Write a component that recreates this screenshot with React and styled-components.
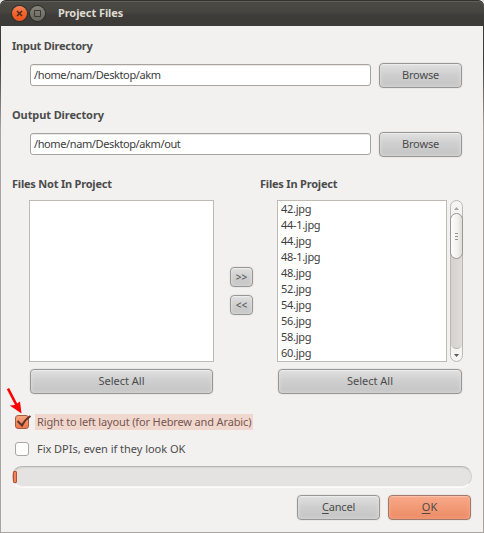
import React from "react";
import styled, { createGlobalStyle } from "styled-components";

const GlobalStyle = createGlobalStyle`
  * { box-sizing: border-box; }
  body { margin: 0; background: #e6e5e3; }
`;

const Window = styled.main`
  width: 484px;
  height: 533px;
  display: flex;
  flex-direction: column;
  overflow: hidden;
  border-radius: 6px 6px 0 0;
  padding: 0 1px 1px;
  background: linear-gradient(#3c3b37 0 60px, #a9a49f 130px);
  color: #4c4c4c;
  font: 11px/16px "Noto Sans", sans-serif;
  white-space: nowrap;
`;

const TitleBar = styled.header`
  flex: none;
  height: 26px;
  margin: 0 -1px;
  padding: 0 0 0 12px;
  display: flex;
  align-items: center;
  border-radius: 6px 6px 0 0;
  border-top: 1px solid #33322e;
  box-shadow: inset 0 1px #605f5a;
  background: linear-gradient(#4b4a45 0, #464540 11px, #3d3c38 14px, #3b3a36 100%);
`;

const WindowControl = styled.span`
  width: 15px;
  height: 15px;
  margin-right: 3px;
  border-radius: 50%;
  display: grid;
  place-items: center;
  box-shadow: 0 0 0 1px #2f2e2b;
  background: ${(p) => (p.$close ? "linear-gradient(#f68458, #f0652f 45%, #e9541b)" : "linear-gradient(#85837a, #68665f)")};
`;

const Title = styled.h1`
  margin: -1px 0 0 10px;
  color: #dfdbd2;
  font: bold 11px/16px "Noto Sans", sans-serif;
  letter-spacing: -0.08px;
`;

const Content = styled.section`
  flex: 1;
  padding: 12px 11px 0 11px;
  display: flex;
  flex-direction: column;
  background: #f2f1ef;
`;

const Heading = styled.h2`
  margin: 0;
  height: 16px;
  font: bold 11px/16px "Noto Sans", sans-serif;
  letter-spacing: ${(p) => p.$track || 0}px;
`;

const Text = styled.span`
  letter-spacing: ${(p) => p.$track || 0}px;
`;

const DirectoryRow = styled.div`
  display: flex;
  align-items: center;
  gap: 8px;
  height: 25px;
  margin: 9px 10px 19px 18px;
`;

const PathField = styled.div`
  flex: 1;
  height: 22px;
  margin-top: -1px;
  padding: 2px 3px;
  border: 1px solid #a8a49d;
  border-radius: 3px;
  background: #fff;
  color: #3c3c3c;
  box-shadow: inset 0 1px #ebe9e6;
`;

const Button = styled.button`
  width: ${(p) => p.$width || 83}px;
  height: ${(p) => p.$height || 25}px;
  flex: none;
  padding: 0 0 1px;
  border: 1px solid ${(p) => (p.$primary ? "#a1796a" : "#979797")};
  border-radius: 4px;
  color: #4c4c4c;
  font: ${(p) => (p.$small ? 10 : 11)}px/16px "Noto Sans", sans-serif;
  letter-spacing: ${(p) => p.$track || 0}px;
  background: ${(p) =>
    p.$primary ? "linear-gradient(#f8aa8b, #f39b77 45%, #ec8b65)" : "linear-gradient(#e0e0e0, #cfcfcf 45%, #c4c4c4)"};
  box-shadow:
    inset 0 1px 1px ${(p) => (p.$primary ? "#fcc0a7" : "#eeeeee")},
    inset 0 0 4px ${(p) => (p.$primary ? "#f7a789" : "#dedede")},
    0 0 0 1px #e9e8e6;
`;

const Mnemonic = styled.span`
  text-decoration: underline;
  text-underline-offset: 2px;
  text-decoration-thickness: 1px;
`;

const Files = styled.div`
  display: grid;
  grid-template-columns: 202px 46px 203px;
`;

const FileColumn = styled.div`
  display: flex;
  flex-direction: column;
`;

const ListArea = styled.div`
  display: flex;
  gap: 3px;
  height: 162px;
  margin: 8px 0 7px 17px;
`;

const FileList = styled.ul`
  width: ${(p) => p.$width}px;
  margin: 0;
  padding: 0 0 0 3px;
  list-style: none;
  overflow: hidden;
  border: 1px solid #bfbab3;
  background: #fff;
  color: #3c3c3c;
`;

const FileItem = styled.li`
  height: 16px;
  letter-spacing: -0.3px;
`;

const ScrollBar = styled.div`
  flex: none;
  width: 13px;
  height: 162px;
  border: 1px solid #bcb8b4;
  border-radius: 7px;
  display: flex;
  flex-direction: column;
  align-items: center;
  background: #f5f4f2;
`;

const ScrollArrow = styled.span`
  height: 12px;
  display: grid;
  place-items: center;
  padding-top: ${(p) => (p.$down ? 0 : 2)}px;
`;

const ScrollTrack = styled.div`
  width: 11px;
  flex: 1;
  border-radius: 6px;
  border-bottom: 1px solid #bcb8b4;
  background: linear-gradient(90deg, #d5d1ce, #dfdcd9);
`;

const ScrollThumb = styled.div`
  width: 13px;
  height: 46px;
  margin-left: -1px;
  border: 1px solid #9b9894;
  border-radius: 7px;
  background: linear-gradient(90deg, #fcfcfb, #f2f1ef 60%, #dedbd8);
  display: flex;
  flex-direction: column;
  align-items: center;
  justify-content: center;
  gap: 2px;
`;

const Grip = styled.i`
  width: 3px;
  height: 1px;
  background: #98948f;
`;

const SelectButton = styled(Button)`
  margin-left: 18px;
`;

const MoveButtons = styled.div`
  display: flex;
  flex-direction: column;
  align-items: center;
  gap: 8px;
  padding: 91px 0 0 9px;
`;

const Option = styled.label`
  position: relative;
  display: flex;
  align-items: center;
  height: 16px;
  gap: 6px;
  padding-left: 3px;
  margin-top: ${(p) => p.$gap}px;
`;

const CheckBox = styled.span`
  position: relative;
  flex: none;
  width: 14px;
  height: 14px;
  border: 1px solid ${(p) => (p.$checked ? "#a65c41" : "#aaa6a2")};
  border-radius: 3px;
  background: ${(p) => (p.$checked ? "linear-gradient(#f8a37f, #ed784c)" : "#fff")};
`;

const CheckMark = styled.svg`
  position: absolute;
  left: -1px;
  top: -2px;
  width: 17px;
  height: 15px;
`;

const OptionText = styled(Text)`
  height: 16px;
  padding: 0 2px;
  color: ${(p) => (p.$highlight ? "#76574f" : "#4c4c4c")};
  background: ${(p) => (p.$highlight ? "#f1d8cf" : "transparent")};
`;

const Pointer = styled.svg`
  position: absolute;
  left: -6px;
  top: -28px;
  width: 18px;
  height: 28px;
`;

const Progress = styled.div`
  flex: none;
  height: 21px;
  margin-top: 9px;
  padding: 4px 0 0;
  border: 1px solid #c9c6c2;
  border-color: #b9b6b1 #d3d0cd #f6f5f4 #bdb9b5;
  border-radius: 10px;
  background: #e4e3e1;
  box-shadow: inset 0 1px 1px #d6d4d1, 0 1px #fdfdfc;
`;

const ProgressValue = styled.div`
  width: 4px;
  height: 12px;
  border: 1px solid #b4532d;
  border-radius: 1px;
  background: #f58258;
`;

const Actions = styled.footer`
  display: flex;
  justify-content: flex-end;
  gap: 8px;
  margin: 8px 1px 0 0;
`;

const projectFiles = ["42.jpg", "44-1.jpg", "44.jpg", "48-1.jpg", "48.jpg", "52.jpg", "54.jpg", "56.jpg", "58.jpg", "60.jpg"];

export default function App() {
  return (
    <>
      <GlobalStyle />
      <Window>
        <TitleBar>
          <WindowControl $close>
            <svg width="7" height="7" viewBox="0 0 7 7"><path d="M1 1l5 5M6 1L1 6" stroke="#44271d" strokeWidth="1.4" /></svg>
          </WindowControl>
          <WindowControl>
            <svg width="7" height="7" viewBox="0 0 7 7"><path d="M.5.5h6v6h-6z" fill="none" stroke="#393834" /></svg>
          </WindowControl>
          <Title>Project Files</Title>
        </TitleBar>
        <Content>
          <Heading $track={-0.25}>Input Directory</Heading>
          <DirectoryRow>
            <PathField><Text $track={-0.38}>/home/nam/Desktop/akm</Text></PathField>
            <Button $track={-0.15}>Browse</Button>
          </DirectoryRow>
          <Heading $track={-0.1}>Output Directory</Heading>
          <DirectoryRow>
            <PathField><Text $track={-0.39}>/home/nam/Desktop/akm/out</Text></PathField>
            <Button $track={-0.15}>Browse</Button>
          </DirectoryRow>
          <Files>
            <FileColumn>
              <Heading $track={-0.21}>Files Not In Project</Heading>
              <ListArea><FileList $width={185} /></ListArea>
              <SelectButton $width={183}>Select All</SelectButton>
            </FileColumn>
            <MoveButtons>
              <Button $width={23} $height={20} $small>&gt;&gt;</Button>
              <Button $width={23} $height={20} $small>&lt;&lt;</Button>
            </MoveButtons>
            <FileColumn>
              <Heading $track={-0.2}>Files In Project</Heading>
              <ListArea>
                <FileList $width={170}>
                  {projectFiles.map((name) => <FileItem key={name}>{name}</FileItem>)}
                </FileList>
                <ScrollBar>
                  <ScrollArrow><svg width="5" height="3"><path d="M0 3L2.5 0L5 3z" fill="#aaa7a3" /></svg></ScrollArrow>
                  <ScrollTrack>
                    <ScrollThumb><Grip /><Grip /><Grip /></ScrollThumb>
                  </ScrollTrack>
                  <ScrollArrow $down><svg width="5" height="3"><path d="M0 0L2.5 3L5 0z" fill="#5d5b58" /></svg></ScrollArrow>
                </ScrollBar>
              </ListArea>
              <SelectButton $width={184}>Select All</SelectButton>
            </FileColumn>
          </Files>
          <Option $gap={20}>
            <CheckBox $checked>
              <CheckMark viewBox="0 0 17 15"><path d="M2.500 7L7 11.500Q10 5.500 15.500 2" fill="none" stroke="#5d3425" strokeWidth="2" /></CheckMark>
            </CheckBox>
            <OptionText $highlight $track={-0.14}>Right to left layout (for Hebrew and Arabic)</OptionText>
            <Pointer viewBox="0 0 18 28"><path d="M2 2.700L10.500 19" stroke="#f00" strokeWidth="2.600" /><path d="M15.500 27.500L3.800 19.500L9 19L14 15.500z" fill="#f00" /></Pointer>
          </Option>
          <Option $gap={11}>
            <CheckBox />
            <OptionText $track={-0.03}>Fix DPIs, even if they look OK</OptionText>
          </Option>
          <Progress><ProgressValue /></Progress>
          <Actions>
            <Button $track={-0.2}><Mnemonic>C</Mnemonic>ancel</Button>
            <Button $primary><Mnemonic>O</Mnemonic>K</Button>
          </Actions>
        </Content>
      </Window>
    </>
  );
}
